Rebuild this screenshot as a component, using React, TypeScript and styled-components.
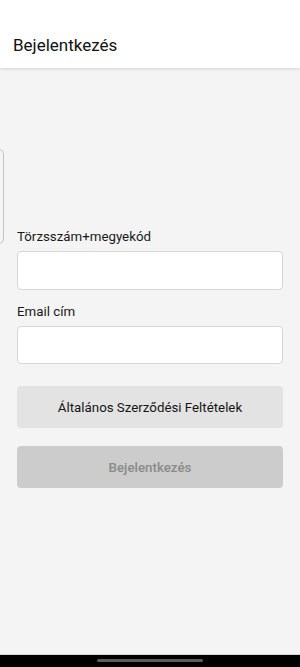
import styled, { createGlobalStyle } from 'styled-components';

const GlobalStyle = createGlobalStyle`
  html, body {
    margin: 0;
    padding: 0;
    background: #f4f4f4;
  }
  body {
    font-family: Roboto, "Noto Sans", sans-serif;
    color: #111;
  }
  * {
    box-sizing: border-box;
  }
`;

const Screen = styled.div`
  width: 300px;
  height: 667px;
  display: flex;
  flex-direction: column;
  overflow: hidden;
  background: #f4f4f4;
`;

const Header = styled.header`
  height: 68px;
  flex-shrink: 0;
  background: #ffffff;
  display: flex;
  align-items: flex-end;
  padding: 0 0 13px 13px;
  box-shadow: 0 1px 3px rgba(0, 0, 0, 0.14);
  position: relative;
  z-index: 1;
`;

const Title = styled.h1`
  margin: 0;
  font-size: 17px;
  font-weight: 400;
  color: #111;
  line-height: 20px;
`;

const Content = styled.main`
  flex: 1;
  display: flex;
  flex-direction: column;
  padding: 81px 17px 0 17px;

  & > * {
    flex-shrink: 0;
  }
`;

// row holding the card that is pushed mostly off the left edge
const CardRow = styled.div`
  height: 80px;
  display: flex;
`;

const OffscreenCard = styled.div`
  width: 204px;
  height: 95px;
  flex-shrink: 0;
  margin-left: -217px;
  border: 1px solid #c4c4c4;
  border-radius: 5px;
  background: transparent;
`;

const Form = styled.div`
  display: flex;
  flex-direction: column;
`;

const Field = styled.div<{ $top: number }>`
  display: flex;
  flex-direction: column;
  margin-top: ${({ $top }) => $top}px;
`;

const Label = styled.label`
  font-size: 13.3px;
  line-height: 16px;
  color: #1a1a1a;
  margin-bottom: 6px;
`;

const Input = styled.input`
  height: 38.5px;
  width: 100%;
  background: #ffffff;
  border: 1px solid #d6d6d6;
  border-radius: 4px;
  outline: none;
  padding: 0 10px;
  font-family: inherit;
  font-size: 14px;
`;

const Button = styled.button<{ $disabled?: boolean; $top: number }>`
  height: 42px;
  width: 100%;
  margin-top: ${({ $top }) => $top}px;
  border: none;
  border-radius: 4px;
  background: ${({ $disabled }) => ($disabled ? '#cccccc' : '#e3e3e3')};
  color: ${({ $disabled }) => ($disabled ? '#8a8a8a' : '#151515')};
  font-family: inherit;
  font-size: 13.3px;
  font-weight: ${({ $disabled }) => ($disabled ? 500 : 400)};
`;

const NavBar = styled.div`
  height: 13px;
  flex-shrink: 0;
  background: #000;
  border-top: 1px solid #d4d4d4;
  display: flex;
  justify-content: center;
  padding-top: 4px;
`;

const Handle = styled.div`
  width: 106px;
  height: 3px;
  border-radius: 2px;
  background: #5c5c5c;
`;

export default function App() {
  return (
    <>
      <GlobalStyle />
      <Screen>
        <Header>
          <Title>Bejelentkezés</Title>
        </Header>
        <Content>
          <CardRow>
            <OffscreenCard />
          </CardRow>
          <Form>
            <Field $top={0}>
              <Label>Törzsszám+megyekód</Label>
              <Input />
            </Field>
            <Field $top={14}>
              <Label>Email cím</Label>
              <Input />
            </Field>
            <Button $top={22}>Általános Szerződési Feltételek</Button>
            <Button $top={18} $disabled>
              Bejelentkezés
            </Button>
          </Form>
        </Content>
        <NavBar>
          <Handle />
        </NavBar>
      </Screen>
    </>
  );
}
